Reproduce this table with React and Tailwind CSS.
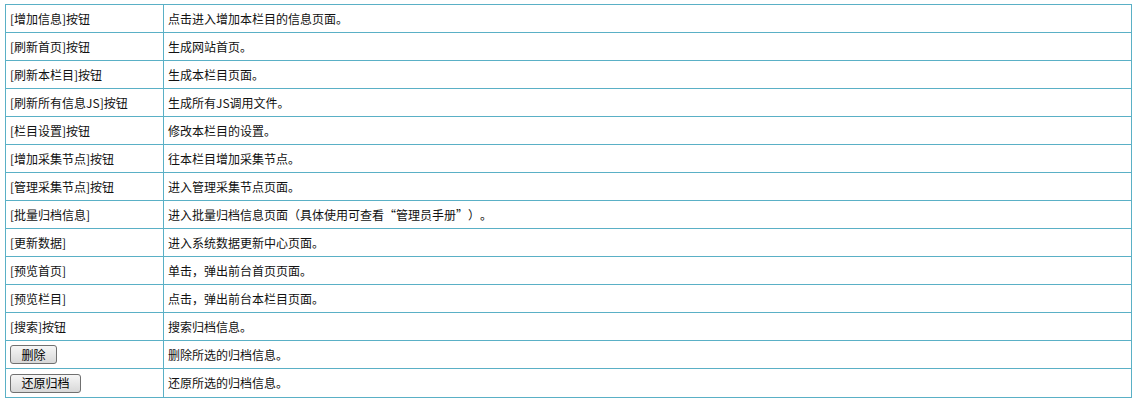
const rows = [
  ["[增加信息]按钮", "点击进入增加本栏目的信息页面。"],
  ["[刷新首页]按钮", "生成网站首页。"],
  ["[刷新本栏目]按钮", "生成本栏目页面。"],
  ["[刷新所有信息JS]按钮", "生成所有JS调用文件。"],
  ["[栏目设置]按钮", "修改本栏目的设置。"],
  ["[增加采集节点]按钮", "往本栏目增加采集节点。"],
  ["[管理采集节点]按钮", "进入管理采集节点页面。"],
  ["[批量归档信息]", "进入批量归档信息页面（具体使用可查看“管理员手册”）。"],
  ["[更新数据]", "进入系统数据更新中心页面。"],
  ["[预览首页]", "单击，弹出前台首页页面。"],
  ["[预览栏目]", "点击，弹出前台本栏目页面。"],
  ["[搜索]按钮", "搜索归档信息。"],
];

const Btn = ({ children, w }) => (
  <button className={`h-[19px] ${w} rounded-[3px] border border-[#707070] bg-gradient-to-b from-[#f6f6f6] to-[#d8d8d8] text-[12px] leading-none text-black`}>
    {children}
  </button>
);

export default function App() {
  return (
    <div lang="zh-CN" className="pt-[4px] pl-[5px] bg-white h-[403px] font-['SimSun','Noto_Sans_CJK_SC',sans-serif] text-[12px] text-[#111] [text-spacing-trim:space-all]">
      <table className="w-[1127px] border-collapse">
        <tbody>
          {rows.map(([a, b], i) => (
            <tr key={i} className="h-[28px]">
              <td className="w-[158px] border border-[#5ab0c6] pl-[4px] align-middle">{a}</td>
              <td className="border border-[#5ab0c6] pl-[4px] align-middle">{b}</td>
            </tr>
          ))}
          <tr className="h-[28px]">
            <td className="border border-[#5ab0c6] pl-[4px] align-middle">
              <Btn w="w-[47px]">删除</Btn>
            </td>
            <td className="border border-[#5ab0c6] pl-[4px] align-middle">删除所选的归档信息。</td>
          </tr>
          <tr className="h-[29px]">
            <td className="border border-[#5ab0c6] pl-[4px] align-middle">
              <Btn w="w-[71px]">还原归档</Btn>
            </td>
            <td className="border border-[#5ab0c6] pl-[4px] align-middle">还原所选的归档信息。</td>
          </tr>
        </tbody>
      </table>
    </div>
  );
}
